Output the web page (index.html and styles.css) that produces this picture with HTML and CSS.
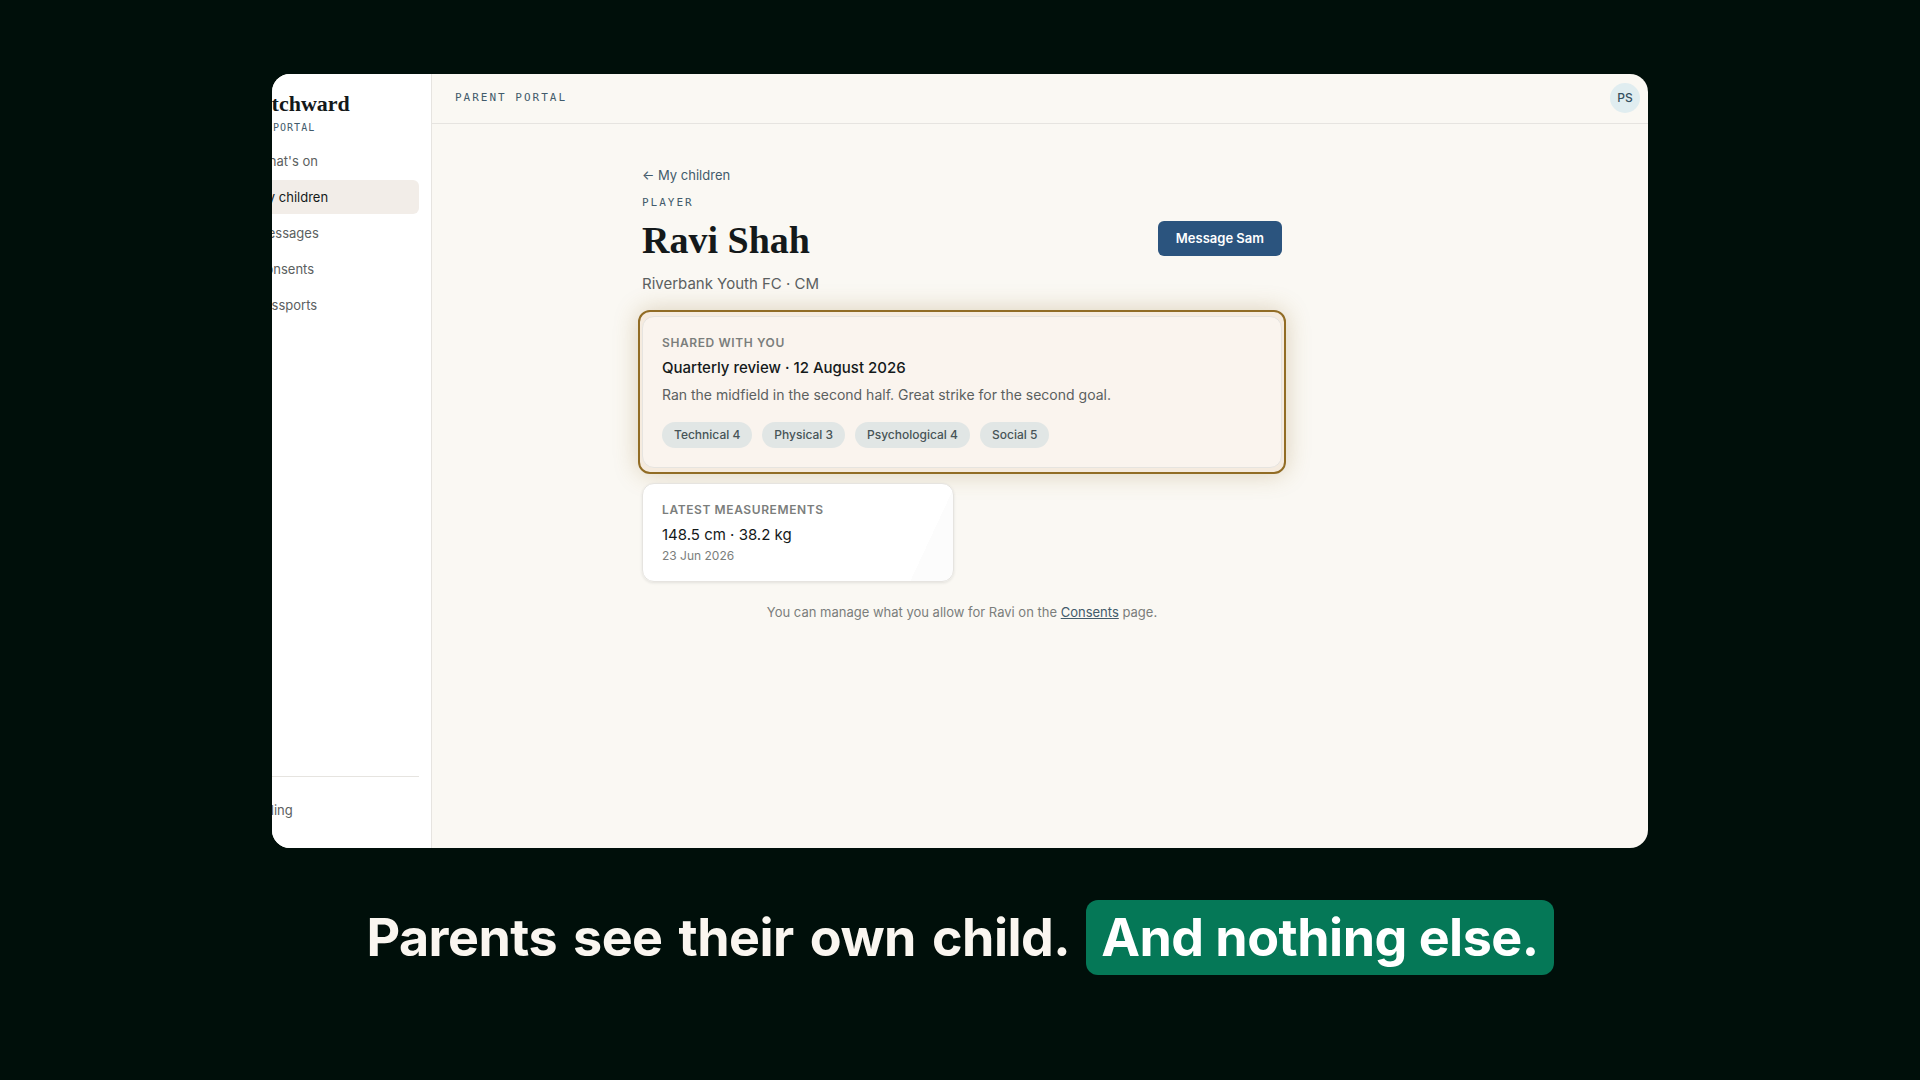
FILE: index.html
```
<!DOCTYPE html>
<html lang="en">
<head>
    <meta charset="UTF-8">
    <meta name="viewport" content="width=device-width, initial-scale=1.0">
    <title>Pitchward - Parent portal</title>
    <link rel="stylesheet" href="styles.css">
</head>
<body>
    <div class="app-window">
        <!-- Sidebar -->
        <aside class="sidebar">
            <div class="brand">Pitchward</div>
            <div class="brand-sub">My portal</div>
            <nav class="sidebar-nav">
                <a href="#" class="sidebar-link">What's on</a>
                <a href="#" class="sidebar-link active">My children</a>
                <a href="#" class="sidebar-link">Messages</a>
                <a href="#" class="sidebar-link">Consents</a>
                <a href="#" class="sidebar-link">Passports</a>
            </nav>
            <div class="sidebar-footer">
                <a href="#" class="sidebar-link">Billing</a>
            </div>
        </aside>

        <div class="main">
            <header class="topbar">
                <span class="topbar-title">Parent portal</span>
                <button type="button" class="avatar">PS</button>
            </header>

            <!-- Player page -->
            <main class="content">
                <a href="#" class="back-link">← My children</a>
                <p class="eyebrow">Player</p>
                <div class="player-header">
                    <h1>Ravi Shah</h1>
                    <button type="button" class="btn">Message Sam</button>
                </div>
                <p class="player-club">Riverbank Youth FC · CM</p>

                <div class="highlight">
                    <section class="card shared">
                        <h2 class="card-label">Shared with you</h2>
                        <p class="card-title">Quarterly review · 12 August 2026</p>
                        <p class="card-text">Ran the midfield in the second half. Great strike for the second goal.</p>
                        <ul class="chips">
                            <li>Technical 4</li>
                            <li>Physical 3</li>
                            <li>Psychological 4</li>
                            <li>Social 5</li>
                        </ul>
                    </section>
                </div>

                <section class="card measurements">
                    <h2 class="card-label">Latest measurements</h2>
                    <p class="card-value">148.5 cm · 38.2 kg</p>
                    <p class="card-date">23 Jun 2026</p>
                </section>

                <p class="note">You can manage what you allow for Ravi on the <a href="#">Consents</a> page.</p>
            </main>
        </div>
    </div>

    <!-- Caption, one span per word -->
    <p class="caption">
        <span>Parents</span>
        <span>see</span>
        <span>their</span>
        <span>own</span>
        <span>child.</span>
        <mark>And nothing else.</mark>
    </p>
</body>
</html>
```
FILE: styles.css
```
:root {
    --backdrop: #000f0a;
    --paper: #faf8f3;
    --ink: #14191a;
    --muted: #5b6060;
    --soft: #7b7e7c;
    --slate: #425b6b;
    --line: #e6e4e0;
    --blue: #2b547e;
    --green: #057857;
    --gold: #916c25;
    --serif: "Liberation Serif", serif;
    --mono: "DejaVu Sans Mono", monospace;
}
* {
    box-sizing: border-box;
}
body {
    margin: 0;
    padding: 74px 24px 24px;
    min-height: 100vh;
    background: var(--backdrop);
    color: var(--ink);
    font-family: Inter, sans-serif;
    font-size: 14px;
    line-height: 20px;
}
h1, h2, p, ul {
    margin: 0;
    padding: 0;
}
button {
    font-family: inherit;
    border: none;
    cursor: pointer;
}
.app-window {
    display: flex;
    max-width: 1376px;
    aspect-ratio: 16 / 9;
    margin: 0 auto;
    border-radius: 18px;
    overflow: hidden;
    background: var(--paper);
}
/* Sidebar, slides partly out of the window */
.sidebar {
    display: flex;
    flex-direction: column;
    flex: none;
    width: 200px;
    margin-left: -40px;
    padding: 18px 12px 21px 8px;
    background: #fff;
    border-right: 1px solid var(--line);
}
.brand {
    padding-left: 12px;
    font-family: var(--serif);
    font-size: 22px;
    font-weight: 700;
    line-height: 24px;
}
.brand-sub {
    margin-top: 4px;
    padding-left: 12px;
    font-family: var(--mono);
    font-size: 10px;
    letter-spacing: 1px;
    line-height: 16px;
    text-transform: uppercase;
    color: var(--slate);
}
.sidebar-nav {
    display: flex;
    flex-direction: column;
    gap: 2px;
    margin-top: 8px;
}
.sidebar-link {
    padding: 7px 16px;
    border-radius: 6px;
    color: var(--muted);
    font-size: 13px;
    text-decoration: none;
}
.sidebar-link.active {
    background: #f2ede8;
    color: var(--ink);
}
.sidebar-footer {
    display: flex;
    flex-direction: column;
    margin-top: auto;
    padding-top: 16px;
    border-top: 1px solid var(--line);
}
/* Main column */
.main {
    flex: 1;
    min-width: 0;
}
.topbar {
    display: flex;
    align-items: center;
    justify-content: space-between;
    height: 50px;
    padding: 0 8px 2px 23px;
    border-bottom: 1px solid var(--line);
}
.topbar-title,
.eyebrow {
    font-family: var(--mono);
    font-size: 11px;
    letter-spacing: 2px;
    text-transform: uppercase;
    color: var(--slate);
}
.avatar {
    width: 30px;
    height: 30px;
    padding: 0;
    border-radius: 50%;
    background: #e0edf0;
    color: #35505f;
    font-size: 12px;
    font-weight: 500;
}
.content {
    max-width: 640px;
    margin: 0 auto;
    padding-top: 41px;
}
.back-link {
    display: block;
    color: var(--slate);
    font-size: 13px;
    text-decoration: none;
}
.eyebrow {
    margin-top: 8px;
}
.player-header {
    display: flex;
    align-items: flex-start;
    justify-content: space-between;
    margin-top: 5px;
}
h1 {
    font-family: var(--serif);
    font-size: 38px;
    font-weight: 700;
    line-height: 44px;
}
.btn {
    margin-top: 3px;
    padding: 8px 18px;
    border-radius: 6px;
    background: var(--blue);
    color: #fff;
    font-size: 13px;
    font-weight: 600;
    line-height: 19px;
}
.player-club {
    margin-top: 10px;
    font-size: 15px;
    line-height: 24px;
    color: var(--muted);
}
/* Cards */
.card {
    padding: 16px 19px;
    border: 1px solid var(--line);
    border-radius: 12px;
}
.highlight {
    margin: 14px -4px 9px;
    padding: 4px 2px;
    border: 2px solid var(--gold);
    border-radius: 12px;
    background: #f5ebdf;
    box-shadow: 0 0 24px rgba(145, 108, 37, 0.28);
}
.shared {
    padding-bottom: 19px;
    background: #faf4ee;
}
.card-label {
    font-size: 12px;
    font-weight: 600;
    letter-spacing: 0.05em;
    line-height: 20px;
    text-transform: uppercase;
    color: var(--soft);
}
.card-title {
    margin-top: 3px;
    font-size: 15px;
    font-weight: 500;
    line-height: 24px;
}
.card-text {
    margin-top: 3px;
    line-height: 24px;
    color: var(--muted);
}
.chips {
    display: flex;
    flex-wrap: wrap;
    gap: 10px;
    margin-top: 15px;
    list-style: none;
}
.chips li {
    padding: 3px 12px;
    border-radius: 13px;
    background: #e1e6e5;
    color: #475457;
    font-size: 12px;
    font-weight: 500;
    line-height: 20px;
}
.measurements {
    max-width: 312px;
    background: linear-gradient(115deg, #fff 88%, #fcfcfc 88%);
    box-shadow: 0 1px 3px rgba(20, 25, 26, 0.1);
}
.card-value {
    margin-top: 3px;
    font-size: 15px;
    line-height: 24px;
}
.card-date {
    font-size: 12px;
    line-height: 18px;
    color: var(--soft);
}
.note {
    margin-top: 20px;
    font-size: 13px;
    text-align: center;
    color: var(--soft);
}
.note a {
    color: var(--slate);
}
/* Caption under the window */
.caption {
    display: flex;
    flex-wrap: wrap;
    justify-content: center;
    column-gap: 16px;
    margin-top: 52px;
    color: #faf6f0;
    font-size: 52px;
    font-weight: 700;
    letter-spacing: -0.01em;
    line-height: 75px;
}
.caption mark {
    padding: 0 15px;
    border-radius: 12px;
    background: var(--green);
    color: #fff;
}
@media (min-width: 1280px) {
    .content {
        margin: 0 auto 0 210px;
    }
}
```
